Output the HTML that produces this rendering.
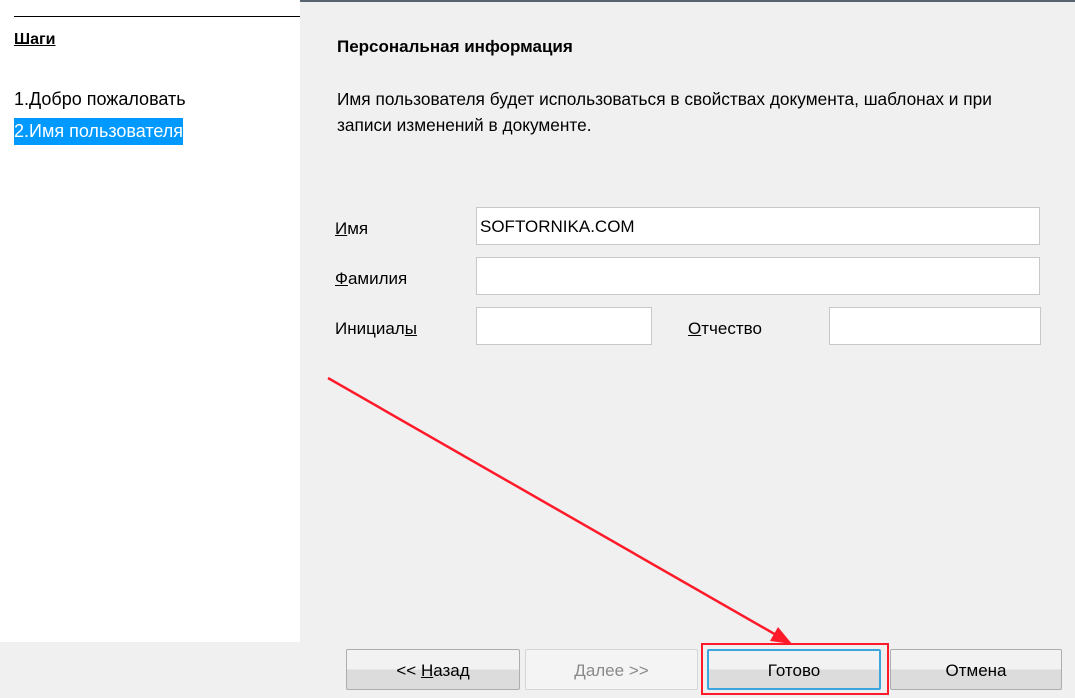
<!DOCTYPE html>
<html><head><meta charset="utf-8"><style>
*{margin:0;padding:0;box-sizing:border-box}
body{width:1075px;height:698px;background:#f0f0f0;position:relative;overflow:hidden;font-family:"Liberation Sans","Noto Sans CJK SC",sans-serif;color:#000}
.a{position:absolute}
.left{left:0;top:0;width:300px;height:642px;background:#fff}
.t{font-size:17px;white-space:nowrap}
.inp{position:absolute;background:#fff;border:1px solid #c8c8c8;height:38px}
.btn{position:absolute;top:649px;height:41px;border:1px solid #adadad;border-radius:2px;background:linear-gradient(#f2f2f2 50%,#dcdcdc 50%);font-size:17px;text-align:center;line-height:42px}
</style></head><body>
<div class="a" style="left:0;top:0;width:1075px;height:2px;background:#5a6470"></div>
<div class="a left"></div>
<div class="a" style="left:14px;top:16px;width:286px;height:1px;background:#000"></div>
<div class="a t" style="left:14px;top:31px;font-weight:bold;text-decoration:underline;font-size:16px">Шаги</div>
<div class="a t" style="left:14px;top:89px;font-size:18px">1.Добро пожаловать</div>
<div class="a t" style="left:14px;top:118px;width:169px;height:27px;background:#0099ff;color:#fff;font-size:18px;line-height:27px">2.Имя пользователя</div>
<div class="a t" style="left:337px;top:37px;font-weight:bold">Персональная информация</div>
<div class="a t" style="left:337px;top:86px;line-height:26px;font-size:17.3px">Имя пользователя будет использоваться в свойствах документа, шаблонах и при<br>записи изменений в документе.</div>
<div class="a t" style="left:335px;top:219px"><u>И</u>мя</div>
<div class="a t" style="left:335px;top:269px"><u>Ф</u>амилия</div>
<div class="a t" style="left:335px;top:319px">Инициал<u>ы</u></div>
<div class="a t" style="left:688px;top:319px"><u>О</u>тчество</div>
<div class="inp" style="left:476px;top:207px;width:564px;font-size:17px;line-height:38px;padding-left:3px">SOFTORNIKA.COM</div>
<div class="inp" style="left:476px;top:257px;width:564px"></div>
<div class="inp" style="left:476px;top:307px;width:176px"></div>
<div class="inp" style="left:829px;top:307px;width:212px"></div>
<div class="btn" style="left:346px;width:174px">&lt;&lt; <u>Н</u>азад</div>
<div class="btn" style="left:525px;width:173px;background:#f4f4f4;border-color:#d6d6d6;color:#8a8a8a"><u>Д</u>алее &gt;&gt;</div>
<div class="btn" style="left:707px;width:174px;border:2px solid #3aa6dd;line-height:40px">Готово</div>
<div class="btn" style="left:890px;width:172px">Отмена</div>
<div class="a" style="left:701px;top:643px;width:188px;height:52px;border:2px solid #ff1a2a"></div>
<svg class="a" style="left:0;top:0" width="1075" height="698"><line x1="328" y1="378" x2="778" y2="636" stroke="#ff1a2a" stroke-width="2.5"/><polygon points="792,644 770,641 778,627" fill="#ff1a2a"/></svg>
</body></html>
